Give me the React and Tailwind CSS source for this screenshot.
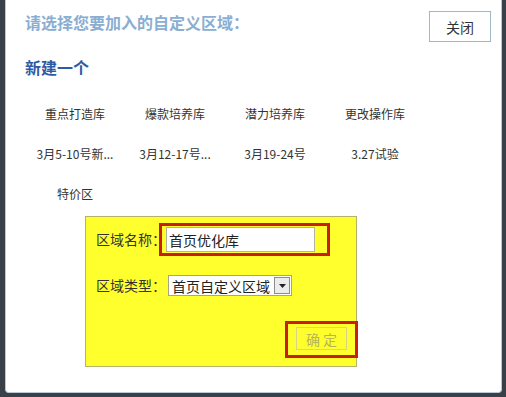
import React from 'react';

const areas = [
  '重点打造库', '爆款培养库', '潜力培养库', '更改操作库',
  '3月5-10号新...', '3月12-17号...', '3月19-24号', '3.27试验',
  '特价区',
];

const App = () => {
  return (
    <div
      className="w-[506px] h-[397px] bg-[#3a4047] pl-[5px] pr-[4px] pb-[4px] overflow-hidden"
      style={{ fontFamily: '"Noto Sans CJK SC", "Noto Sans", sans-serif' }}
    >
      {/* Dialog */}
      <div className="h-full bg-white border-x border-b border-[#b9c9d8] rounded-b-[4px] pl-[19px] pr-[10px]">
        {/* Header */}
        <div className="flex justify-between items-start pt-[11px]">
          <h2 className="text-[16px] leading-[22px] font-bold text-[#8aaed2]">请选择您要加入的自定义区域：</h2>
          <button className="w-[62px] h-[31px] border border-[#9fb8c4] bg-white text-[14px] text-[#333] leading-none">
            关闭
          </button>
        </div>

        <h3 className="mt-[14px] text-[16px] leading-[22px] font-bold text-[#2f5ba6]">新建一个</h3>

        {/* Area list */}
        <div className="mt-[16px] grid grid-cols-[repeat(4,100px)]">
          {areas.map((a) => (
            <div key={a} className="h-[40px] flex items-center justify-center text-[12px] text-[#333]">
              {a}
            </div>
          ))}
        </div>

        {/* New area form */}
        <div className="relative ml-[60px] mt-[2px] w-[272px] h-[151px] bg-[#ffff2e] border border-[#b3b369] pl-[10px] pt-[10px]">
          <div className="flex items-center h-[25px]">
            <span className="w-[70px] text-[14px] text-[#333]">区域名称：</span>
            <input
              readOnly
              value="首页优化库"
              className="w-[149px] h-[25px] bg-white border border-[#b5b5a0] px-[2px] text-[14px] text-[#222] outline-none"
              style={{ fontFamily: 'inherit' }}
            />
          </div>
          <div className="flex items-center h-[21px] mt-[23px]">
            <span className="w-[72px] text-[14px] text-[#333]">区域类型：</span>
            <div className="w-[124px] h-[21px] bg-white border border-[#a5a58a] flex items-center">
              <span className="flex-1 pl-[3px] text-[14px] leading-none text-[#222]">首页自定义区域</span>
              <span className="w-[16px] h-[17px] mr-[1px] border border-[#8e8e8e] bg-[#ececec] flex items-center justify-center">
                <svg width="7" height="4" viewBox="0 0 7 4"><path d="M0 0h7L3.5 4z" fill="#222" /></svg>
              </span>
            </div>
          </div>
          <div className="flex justify-end pr-[9px] mt-[31px]">
            <button className="w-[51px] h-[23px] border border-[#d5d58a] text-[14px] text-[#b5b55a] leading-none">
              确 定
            </button>
          </div>

          {/* annotation boxes */}
          <div className="absolute left-[73px] top-[6px] w-[171px] h-[33px] border-[3px] border-[#c81e0c]" />
          <div className="absolute left-[199px] top-[104px] w-[73px] h-[37px] border-[3px] border-[#c81e0c]" />
        </div>
      </div>
    </div>
  );
};

export default App;
